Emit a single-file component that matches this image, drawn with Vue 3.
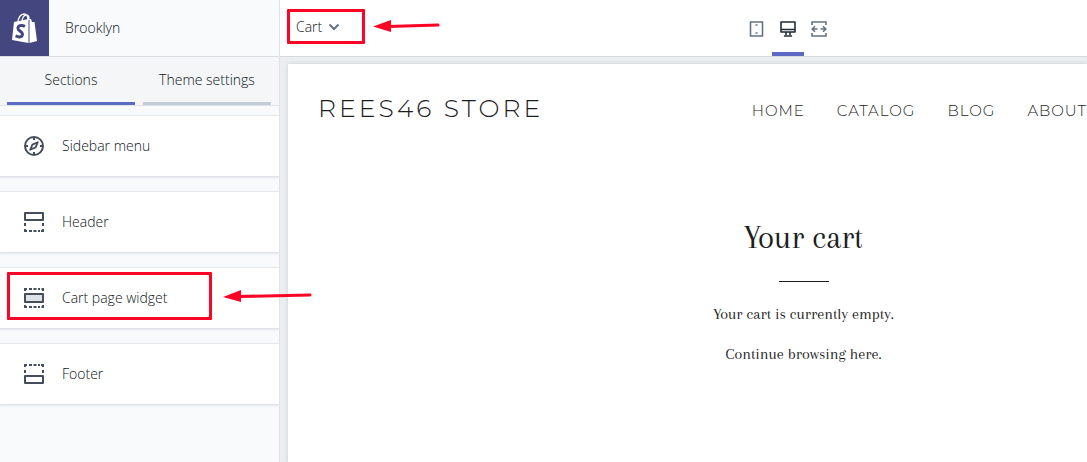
<script setup>
import { ref } from 'vue'

const page = ref('cart')
const tab = ref('sections')
const device = ref('desktop')
const tabs = [
  { id: 'sections', label: 'Sections' },
  { id: 'settings', label: 'Theme settings' },
]
const sections = [
  { id: 'menu', label: 'Sidebar menu' },
  { id: 'header', label: 'Header' },
  { id: 'cart', label: 'Cart page widget', marked: true },
  { id: 'footer', label: 'Footer' },
]
const devices = [
  { id: 'mobile', label: 'Mobile' },
  { id: 'desktop', label: 'Desktop' },
  { id: 'wide', label: 'Full width' },
]
const links = ['Home', 'Catalog', 'Blog', 'About']
</script>

<template>
  <div class="editor">
    <aside class="sidebar">
      <header class="brand">
        <a class="logo" href="#" aria-label="Shopify">
          <svg width="27" height="31" viewBox="0 0 27 31">
            <path d="M3 9 L17.500 6 L17.500 30 L1 27 Z" fill="#fff" />
            <path d="M18.500 6 L20 6 L21 9 L23.500 9 L26 28 L18.500 30 Z" fill="#fff" />
            <path d="M7 10 C7 4 10 1 13 1 C16 1 17 4 17 7 M11 9 C11 5 13 2 15 2 C18 2 18 4 18 7" fill="none" stroke="#fff" stroke-width="1.3" />
            <path d="M14 13.400 C10 11.300 6.700 12.800 7 15.500 C7.400 18.300 12 18.600 11.400 21.800 C10.800 24.700 7.500 24.400 4.600 22.800" fill="none" stroke="#43467f" stroke-width="3" />
          </svg>
        </a>
        <span class="theme">Brooklyn</span>
      </header>
      <nav class="tabs">
        <button v-for="t in tabs" :key="t.id" class="tab" :class="{ active: tab === t.id }" type="button" @click="tab = t.id">{{ t.label }}</button>
      </nav>
      <div class="list">
        <div v-for="s in sections" :key="s.id" class="card">
          <button class="section" type="button">
            <svg width="20" height="20" viewBox="0 0 20 20" fill="none" stroke="#454f5b" stroke-width="2">
              <template v-if="s.id === 'menu'">
                <circle cx="10" cy="10" r="9" />
                <path d="M10 1v3M10 16v3M1 10h3M16 10h3" />
                <path d="M13.8 6.2 L11.6 11.4 L6.2 13.8 L8.4 8.6 Z" stroke-width="1.8" stroke-linejoin="round" />
              </template>
              <template v-else-if="s.id === 'header'">
                <path d="M1 1h18v7H1z" stroke-linejoin="round" />
                <path d="M1 11v3M19 11v3M1 17v2h2M19 17v2h-2M5 19h3M9.500 19h3M14 19h2" />
              </template>
              <template v-else-if="s.id === 'cart'">
                <path d="M1 6h18v8H1z" fill="#dfe3e8" stroke-linejoin="round" />
                <path d="M1 3V1h2M5 1h3M9.500 1h3M14 1h2M17.500 1H19v2M1 17v2h2M5 19h3M9.500 19h3M14 19h2M17.500 19H19v-2" />
              </template>
              <template v-else>
                <path d="M1 12h18v7H1z" stroke-linejoin="round" />
                <path d="M1 9V6M19 9V6M1 3V1h2M19 3V1h-2M5 1h3M9.500 1h3M14 1h2" />
              </template>
            </svg>
            <span>{{ s.label }}</span>
          </button>
          <template v-if="s.marked">
            <span class="mark mark-section"></span>
            <svg class="arrow arrow-section" width="90" height="14" viewBox="0 0 90 14">
              <path d="M15 7.500 L87 6" stroke="#fb0425" stroke-width="3" stroke-linecap="round" />
              <path d="M0 8 L18 1 V13 Z" fill="#fb0425" />
            </svg>
          </template>
        </div>
      </div>
    </aside>

    <main class="stage">
      <header class="toolbar">
        <label class="picker">
          <select v-model="page" aria-label="Page">
            <option value="cart">Cart</option>
          </select>
          <svg width="12" height="8" viewBox="0 0 12 8" fill="none" stroke="#637381" stroke-width="2"><path d="M1.500 1.500 L6 6 L10.500 1.500" /></svg>
          <span class="mark mark-picker"></span>
        </label>
        <svg class="arrow arrow-picker" width="68" height="14" viewBox="0 0 68 14">
          <path d="M15 7.500 L65 6" stroke="#fb0425" stroke-width="3" stroke-linecap="round" />
          <path d="M0 7.500 L18 1 V13 Z" fill="#fb0425" />
        </svg>
        <div class="devices">
          <button v-for="d in devices" :key="d.id" class="device" :class="{ active: device === d.id }" type="button" :aria-label="d.label" @click="device = d.id">
            <svg width="16" height="16" viewBox="0 0 16 16" fill="none" stroke="currentColor" stroke-width="2">
              <template v-if="d.id === 'mobile'">
                <path d="M2.500 1h12v14h-12z" stroke-width="1.600" />
                <path d="M7.500 4h2M7.500 12h2" stroke-width="1.600" />
              </template>
              <template v-else-if="d.id === 'desktop'">
                <path d="M1 1h14v10H1zM1 8.500h14" stroke-width="1.600" stroke-linejoin="round" />
                <path d="M6 11v3M10 11v3M4 15h8" stroke-width="1.600" />
              </template>
              <template v-else>
                <path d="M1 4V1h14v3M1 12v3h14v-3" stroke-width="1.600" />
                <path d="M1 8h5.500M9.500 8h5.500M4 5.200L1.200 8L4 10.800M12 5.200L14.800 8L12 10.800" stroke-width="1.600" />
              </template>
            </svg>
          </button>
        </div>
      </header>

      <div class="canvas">
        <article class="store">
          <header class="store-head">
            <a class="store-name" href="#">REES46 STORE</a>
            <nav class="store-nav">
              <a v-for="l in links" :key="l" href="#">{{ l }}</a>
            </nav>
          </header>
          <section class="cart">
            <h1>Your cart</h1>
            <hr />
            <p>Your cart is currently empty.</p>
            <p>Continue browsing <a href="#">here</a>.</p>
          </section>
        </article>
      </div>
    </main>
  </div>
</template>

<style>
body {
  margin: 0;
  overflow: hidden;
}
</style>

<style scoped>
.editor {
  display: flex;
  min-height: 100vh;
  font: 350 14px/20px "Open Sans", "Noto Sans", sans-serif;
  color: #0c1520;
  background: #f9fafb;
}
a { color: inherit; text-decoration: none; }
button, select {
  margin: 0;
  padding: 0;
  border: 0;
  background: none;
  font: inherit;
  color: inherit;
}
.sidebar {
  flex: 0 0 279px;
  border-right: 1px solid #dfe3e8;
  background: #f9fafc;
}
.brand {
  display: flex;
  align-items: center;
  height: 56px;
  border-bottom: 1px solid #d9dce0;
  box-shadow: 0 1px 3px #dfe3e8;
}
.logo {
  display: flex;
  align-items: center;
  justify-content: center;
  width: 49px;
  height: 56px;
  background: #43467f;
}
.theme { margin-left: 16px; }
.tabs {
  display: flex;
  gap: 8px;
  height: 48px;
  padding: 0 8px 0 7px;
  background: #f4f6f8;
  border-bottom: 1px solid #dfe3e8;
}
.tab {
  flex: 1;
  border-bottom: 3px solid #c4cdd5;
}
.tab.active { border-color: #5c6ac4; }
.list {
  display: grid;
  gap: 14px;
  padding-top: 9px;
}
.card {
  position: relative;
  box-sizing: border-box;
  height: 62px;
  background: #fff;
  border-top: 1px solid #e4e7eb;
  border-bottom: 1px solid #dfe2e6;
  box-shadow: 0 1px 2px #e4e6ea;
}
.section {
  display: flex;
  align-items: center;
  gap: 18px;
  width: 100%;
  height: 60px;
  padding-left: 24px;
  text-align: left;
}
.mark {
  position: absolute;
  box-sizing: border-box;
  border: 3px solid #fb0425;
  border-radius: 1px;
  pointer-events: none;
}
.mark-section { left: 7px; top: 4px; width: 205px; height: 48px; }
.arrow { position: absolute; z-index: 2; pointer-events: none; }
.arrow-section { left: 223px; top: 21px; }
.stage {
  flex: 1;
  min-width: 0;
  display: flex;
  flex-direction: column;
}
.toolbar {
  position: relative;
  display: flex;
  align-items: center;
  justify-content: center;
  height: 56px;
  background: #fff;
  border-bottom: 1px solid #d5d8dc;
}
.picker {
  position: absolute;
  left: 16px;
  top: 17px;
  display: flex;
  align-items: center;
  gap: 5px;
}
.picker select { appearance: none; outline: none; }
.mark-picker { left: -9px; top: -8px; width: 78px; height: 35px; }
.arrow-picker { left: 93px; top: 19px; }
.devices {
  display: flex;
  align-self: stretch;
  margin-left: 208px;
}
.device {
  display: flex;
  align-items: center;
  justify-content: center;
  width: 31px;
  padding-top: 5px;
  border-bottom: 4px solid transparent;
  color: #637381;
}
.device.active {
  width: 32px;
  color: #212b36;
  border-color: #5c6ac4;
}
.canvas {
  flex: 1;
  display: flex;
  padding: 7px 0 0 8px;
  background: #ebeef0;
  overflow: hidden;
}
.store {
  flex: 1;
  min-width: 0;
  background: #fff;
  box-shadow: 0 0 4px #c8ccd0;
  color: #1c1d1d;
}
.store-head {
  display: flex;
  align-items: center;
  justify-content: space-between;
  height: 88px;
  padding-left: 30px;
  font-family: Montserrat, Lato, sans-serif;
  font-weight: 300;
  white-space: nowrap;
}
.store-name { font-size: 25px; line-height: 30px; letter-spacing: 3px; }
.store-nav {
  display: flex;
  gap: 32px;
  padding-top: 6px;
  font-size: 15px;
  letter-spacing: 1px;
  text-transform: uppercase;
}
.cart {
  padding-top: 66px;
  padding-left: 232px;
  text-align: center;
  font-family: Arapey, "Old Standard TT", "Liberation Serif", serif;
  font-weight: 400;
}
.cart h1 { margin: 0; font-size: 33px; line-height: 40px; font-weight: 400; }
.cart hr { width: 50px; margin: 23px auto 22px; border: 0; border-top: 1px solid #1c1d1d; }
.cart p { margin: 0 0 20px; font-size: 16px; line-height: 20px; }
</style>
